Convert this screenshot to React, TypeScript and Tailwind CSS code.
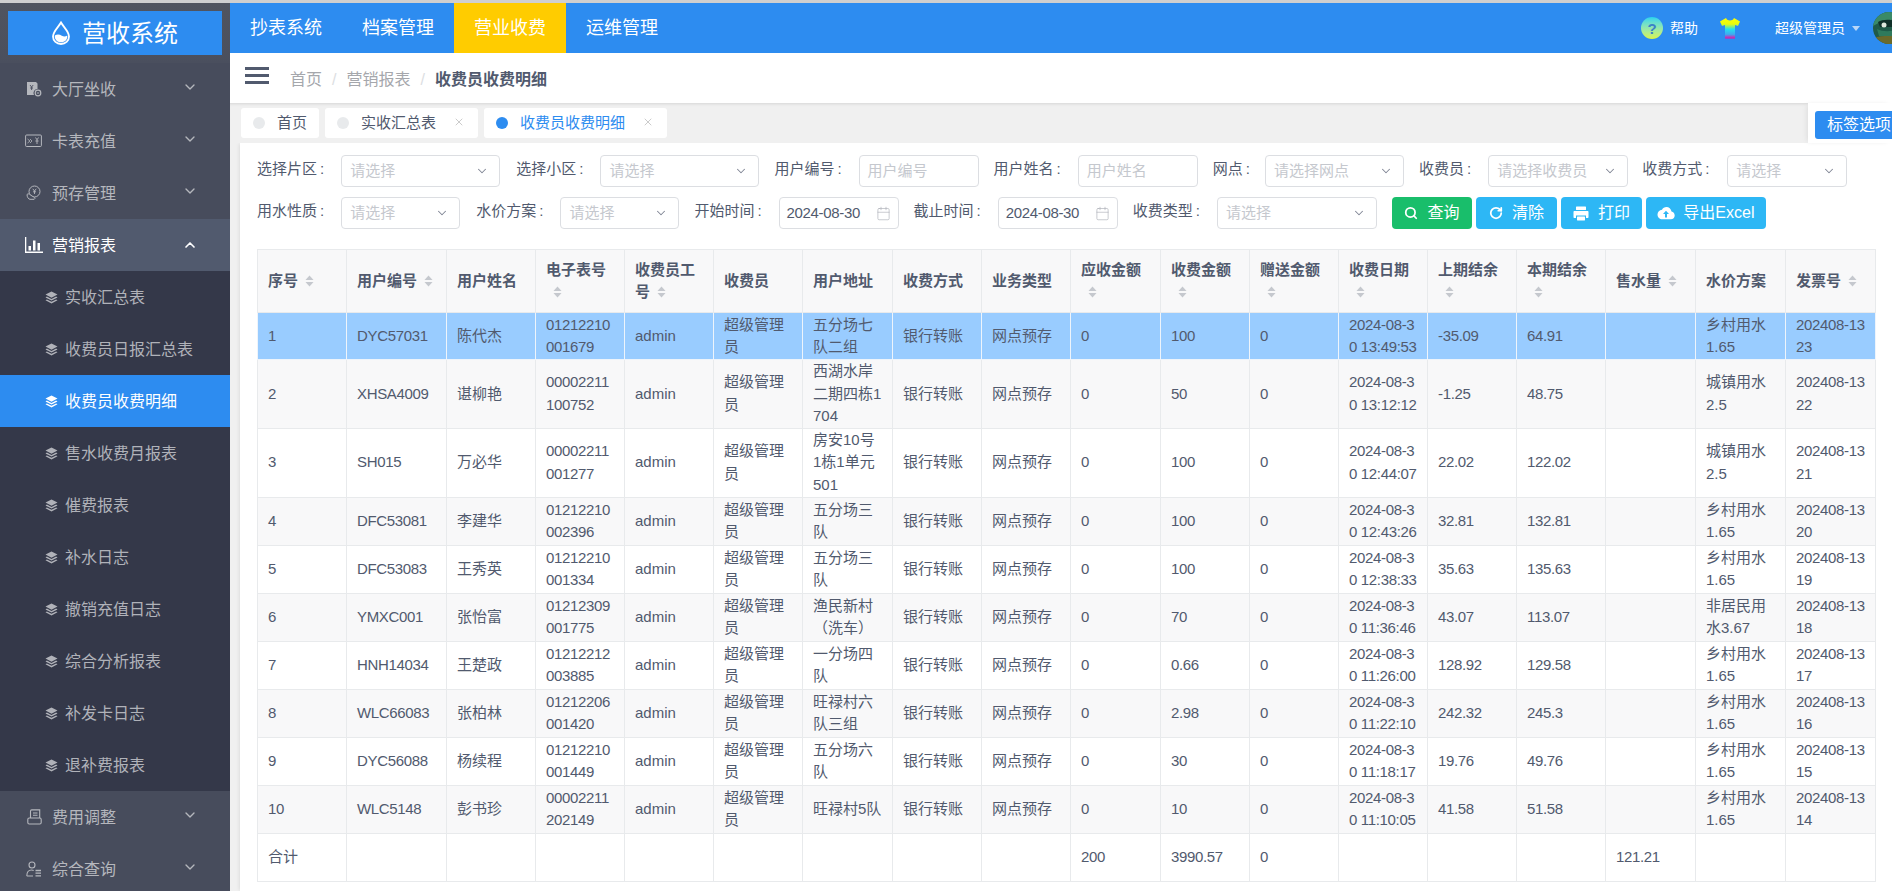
import React from 'react';
import { Calendar, ChevronDown, ChevronUp, RotateCw, Search, X } from 'lucide-react';

const FONT = '"Liberation Sans", "Noto Sans CJK SC", sans-serif';

// 侧边栏 icons
const StackIcon = () => (
  <svg width="13" height="13" viewBox="0 0 13 13" fill="currentColor" className="shrink-0">
    <path d="M6.5 0.5 12.5 3.6 6.5 6.8 0.5 3.6Z" />
    <path d="M1.9 5.6 6.5 8 11.1 5.6 12.5 6.4 6.5 9.6 0.5 6.4Z" />
    <path d="M1.9 8.4 6.5 10.8 11.1 8.4 12.5 9.2 6.5 12.5 0.5 9.2Z" />
  </svg>
);

const HallIcon = () => (
  <svg width="16" height="16" viewBox="0 0 16 16" className="shrink-0">
    <path d="M1 1h9l1.5 1.5V8a4 4 0 0 0-3.5 6H1Z" fill="#b5b7bd" />
    <path d="M4 4l1.6 2L7.2 4M5.6 6v3M4.2 7h2.8" stroke="#474c5c" strokeWidth="0.9" fill="none" />
    <circle cx="12" cy="12" r="2.8" fill="none" stroke="#b5b7bd" strokeWidth="1.2" />
    <path d="M10.8 12h2.4" stroke="#b5b7bd" strokeWidth="1" />
  </svg>
);

const CardIcon = () => (
  <svg width="17" height="14" viewBox="0 0 17 14" fill="none" stroke="#b5b7bd" className="shrink-0">
    <rect x="0.6" y="1" width="15.8" height="11.5" rx="1" strokeWidth="1" />
    <path d="M2.5 5 5 7 2.5 9M5 5 7 7 5 9" strokeWidth="0.8" />
    <path d="M10.5 3.5 12 5.8 13.5 3.5M12 5.8V10M10.4 7h3.2" strokeWidth="0.9" />
  </svg>
);

const SaveIcon = () => (
  <svg width="16" height="16" viewBox="0 0 16 16" fill="none" stroke="#b5b7bd" className="shrink-0">
    <circle cx="8.5" cy="6.5" r="5.5" strokeWidth="1" />
    <path d="M6.8 3.8 8.5 6 10.2 3.8M8.5 6v3M7 6.8h3" strokeWidth="0.9" />
    <path d="M1 9.5c1-1 2.4-.8 3.6.6l2.6 1.6c1.6.6 2.5 1.6 1 2.6H4C2.500 14.300 1 12 1 9.500Z" fill="#474c5c" strokeWidth="1" />
  </svg>
);

const ChartIcon = () => (
  <svg width="18" height="16" viewBox="0 0 18 16" fill="#fff" className="shrink-0">
    <path d="M0 0h1.300v14.500H18V16H0Z" />
    <rect x="3.500" y="9" width="2.500" height="4.500" />
    <rect x="8" y="3.500" width="2.500" height="10" />
    <rect x="12.500" y="6" width="2.500" height="7.500" />
  </svg>
);

const BookIcon = () => (
  <svg width="15" height="16" viewBox="0 0 15 16" fill="none" stroke="#b5b7bd" strokeWidth="1.100" className="shrink-0">
    <path d="M3.500 9V2.200c0-.8.500-1.300 1.200-1.300h8v8.100" />
    <path d="M6 4h4.500M6 6.300h4.500" />
    <rect x="0.800" y="9" width="13.400" height="6" rx="1.400" />
  </svg>
);

const UserIcon = () => (
  <svg width="16" height="16" viewBox="0 0 16 16" fill="none" stroke="#b5b7bd" strokeWidth="1.100" className="shrink-0">
    <circle cx="6" cy="4" r="3" />
    <path d="M0.800 15c0-3.600 1.800-6 4.800-6 .8 0 1.500.2 2.100.5M0.800 15h6.200" />
    <path d="M9.500 9.500H15M9.500 12.200H15M9.500 14.900H15" strokeWidth="1.300" />
  </svg>
);

const SortIcon = () => (
  <svg width="9" height="12" viewBox="0 0 9 12" fill="#c5c8ce" className="inline-block align-[-1px] ml-[7px]">
    <path d="M4.500 0.500 8.500 5H0.500Z" />
    <path d="M4.500 11.500 0.500 7H8.500Z" />
  </svg>
);

const PrinterIcon = () => (
  <svg width="16" height="15" viewBox="0 0 16 15" fill="#fff">
    <rect x="3" y="0.500" width="10" height="3.500" rx="0.600" />
    <path d="M1.500 5h13c.6 0 1 .4 1 1v5c0 .6-.4 1-1 1H13V9.500H3V12H1.500c-.6 0-1-.4-1-1V6c0-.6.400-1 1-1Z" />
    <rect x="4" y="10.500" width="8" height="4" rx="0.400" />
  </svg>
);

const CloudIcon = () => (
  <svg width="18" height="14" viewBox="0 0 18 14" fill="#fff">
    <path d="M14.500 5.600C14.100 2.700 11.900 1 9.500 1 7.500 1 5.800 2 5 3.800 2.500 4 .5 5.900.5 8.500c0 2.800 2.200 4.800 4.800 4.800h8.700c2.100 0 3.700-1.700 3.700-3.800 0-2-1.400-3.700-3.200-3.900Z" />
    <path d="M9 4.800 12 8H10v3.500H8V8H6Z" fill="#2db7f5" />
  </svg>
);

const WaterDrop = () => (
  <svg width="18" height="24" viewBox="0 0 18 24" fill="none" className="shrink-0">
    <path d="M9 1.500C6.500 6 1 10.500 1 15.500 1 20 4.600 23 9 23s8-3 8-7.500C17 10.500 11.500 6 9 1.500Z" stroke="#fff" strokeWidth="1.800" />
    <path d="M2.800 14.500c2.500-1.500 5-1 7 .2 2 1.100 3.500 1 5.500-.2.400 4-2.500 6.800-6.300 6.800-3.900 0-6.600-3-6.200-6.800Z" fill="#fff" />
  </svg>
);

const HelpIcon = () => (
  <div className="relative flex h-[22px] w-[22px] items-center justify-center rounded-full bg-gradient-to-b from-[#22d3ee] to-[#d9f542] text-[15px] font-bold leading-none text-[#3b82c8]">
    ?
  </div>
);

const ShirtIcon = () => (
  <svg width="22" height="22" viewBox="0 0 22 22">
    <defs>
      <linearGradient id="shirtGrad" x1="0" y1="0" x2="0" y2="1">
        <stop offset="0" stopColor="#ffff00" />
        <stop offset="0.3" stopColor="#e8fa10" />
        <stop offset="0.55" stopColor="#22e0ee" />
        <stop offset="0.8" stopColor="#40a8f0" />
        <stop offset="1" stopColor="#f00aa0" />
      </linearGradient>
    </defs>
    <path d="M7 1 1 4.500 3 9l3-1v13.500h10V8l3 1 2-4.500L15 1c-.8 1.800-2.300 2.500-4 2.500S7.800 2.800 7 1Z" fill="url(#shirtGrad)" />
  </svg>
);

const Avatar = () => (
  <svg width="32" height="32" viewBox="0 0 32 32" className="shrink-0 rounded-full">
    <rect width="32" height="32" fill="#1f5a48" />
    <path d="M0 0h32v9C20 6 10 8 0 14Z" fill="#3a8a68" />
    <path d="M5 10c5-3 13-3 20 0l-1 5H7Z" fill="#10302a" />
    <circle cx="11" cy="13" r="2.500" fill="#dfe8de" />
    <path d="M0 26c10-3 22-3 32 0v6H0Z" fill="#6b6a2a" />
    <path d="M4 17c6 3 14 3 22 0v7H6Z" fill="#2f7a5c" />
  </svg>
);

const NAV_TOP_BEFORE = [
  { name: '大厅坐收', icon: <HallIcon /> },
  { name: '卡表充值', icon: <CardIcon /> },
  { name: '预存管理', icon: <SaveIcon /> },
];
const NAV_TOP_AFTER = [
  { name: '费用调整', icon: <BookIcon /> },
  { name: '综合查询', icon: <UserIcon /> },
];
const SUB_MENU = ['实收汇总表', '收费员日报汇总表', '收费员收费明细', '售水收费月报表', '催费报表', '补水日志', '撤销充值日志', '综合分析报表', '补发卡日志', '退补费报表'];

const Sidebar = () => (
  <aside className="flex w-[230px] shrink-0 flex-col overflow-hidden bg-[#474c5c]">
    <div className="h-[60px] shrink-0 bg-gradient-to-b from-[#50545f] to-[#4a4f5e] pl-2 pr-2 pt-2">
      <div className="flex h-[44px] items-center justify-center gap-3 bg-[#2d8cf0] text-[24px] leading-none text-white">
        <WaterDrop />
        <span className="mt-[2px]">营收系统</span>
      </div>
    </div>
    {NAV_TOP_BEFORE.map((m) => (
      <div key={m.name} className="flex h-[52px] shrink-0 items-center text-[16px] text-[#b5b7bd]">
        <div className="flex w-[52px] justify-end pr-[10px]">{m.icon}</div>
        <span className="mt-[2px]">{m.name}</span>
        <ChevronDown size={16} strokeWidth={2} className="ml-auto mr-[32px] -mt-1" />
      </div>
    ))}
    <div className="flex h-[52px] shrink-0 items-center bg-[#515a6e] text-[16px] text-white">
      <div className="flex w-[52px] justify-end pr-[9px]"><ChartIcon /></div>
      <span className="mt-[2px]">营销报表</span>
      <ChevronUp size={16} strokeWidth={2.500} className="ml-auto mr-[32px]" />
    </div>
    <div className="shrink-0 bg-[#343849]">
      {SUB_MENU.map((s) => (
        <div key={s} className={`flex h-[52px] items-center pl-[45px] text-[16px] ${s === '收费员收费明细' ? 'bg-[#2d8cf0] text-white' : 'text-[#b0b2b9]'}`}>
          <StackIcon />
          <span className="ml-[7px] mt-[2px]">{s}</span>
        </div>
      ))}
    </div>
    {NAV_TOP_AFTER.map((m) => (
      <div key={m.name} className="flex h-[52px] shrink-0 items-center text-[16px] text-[#b5b7bd]">
        <div className="flex w-[52px] justify-end pr-[10px]">{m.icon}</div>
        <span className="mt-[2px]">{m.name}</span>
        <ChevronDown size={16} strokeWidth={2} className="ml-auto mr-[32px] -mt-1" />
      </div>
    ))}
  </aside>
);

const TopBar = () => (
  <header className="flex h-[50px] shrink-0 items-stretch bg-[#2d8cf0] text-white">
    {['抄表系统', '档案管理', '营业收费', '运维管理'].map((n) => (
      <div key={n} className={`flex w-[112px] items-center justify-center text-[18px] ${n === '营业收费' ? 'bg-[#ffcc00]' : ''}`}>
        {n}
      </div>
    ))}
    <div className="ml-auto -mr-[13px] flex items-center">
      <HelpIcon />
      <span className="ml-[7px] text-[14px]">帮助</span>
      <div className="ml-[21px]"><ShirtIcon /></div>
      <span className="ml-[34px] text-[14px]">超级管理员</span>
      <span className="ml-[7px] mr-[13px] h-0 w-0 border-x-[4px] border-t-[5px] border-x-transparent border-t-[#b9d7f8]" />
      <Avatar />
    </div>
  </header>
);

const Breadcrumb = () => (
  <div className="flex h-[50px] shrink-0 items-center bg-white pl-[15px] pt-[4px] text-[16px]">
    <div className="-mt-[10px] flex w-[24px] flex-col gap-[4px]">
      <span className="h-[3px] bg-[#515a6e]" />
      <span className="h-[3px] bg-[#515a6e]" />
      <span className="h-[3px] bg-[#515a6e]" />
    </div>
    <span className="ml-[21px] text-[#a5a7ac]">首页</span>
    <span className="mx-[10px] text-[#dcdee2]">/</span>
    <span className="text-[#a5a7ac]">营销报表</span>
    <span className="mx-[10px] text-[#dcdee2]">/</span>
    <span className="font-bold text-[#515a6e]">收费员收费明细</span>
  </div>
);

const TabsBar = () => (
  <div className="relative flex h-[40px] shrink-0 items-center gap-[6px] bg-[#f0f0f0] pl-[11px] text-[15px] shadow-[inset_0_3px_3px_-2px_#d5d5d5]">
    <div className="flex h-[30px] w-[78px] items-center rounded-[3px] bg-white pl-[12px] text-[#515a6e]">
      <span className="mr-[12px] h-[12px] w-[12px] rounded-full bg-[#e8eaec]" />
      首页
    </div>
    <div className="flex h-[30px] w-[153px] items-center rounded-[3px] bg-white pl-[12px] text-[#515a6e]">
      <span className="mr-[12px] h-[12px] w-[12px] rounded-full bg-[#e8eaec]" />
      实收汇总表
      <X size={12} strokeWidth={1.200} className="ml-[17px] -mt-[2px] text-[#a8a8a8]" />
    </div>
    <div className="flex h-[30px] w-[183px] items-center rounded-[3px] bg-white pl-[12px] text-[#2d8cf0]">
      <span className="mr-[12px] h-[12px] w-[12px] rounded-full bg-[#2d8cf0]" />
      收费员收费明细
      <X size={12} strokeWidth={1.200} className="ml-[17px] -mt-[2px] text-[#a8a8a8]" />
    </div>
    <div className="absolute right-0 top-0 flex h-[40px] w-[84px] items-start overflow-hidden bg-white pl-[7px] pt-[8px] shadow-[-3px_0_5px_-2px_#dcdcdc]">
      <div className="flex h-[28px] w-[100px] shrink-0 items-center rounded-[3px] bg-[#2d8cf0] pl-[12px] text-[16px] whitespace-nowrap text-white">标签选项</div>
    </div>
  </div>
);

const Label = ({ text, gap = 'mr-[17px]' }: { text: string; gap?: string }) => (
  <span className={`-mt-[3px] whitespace-nowrap text-[15px] text-[#515a6e] ${gap}`}>
    {text}<span className="ml-[3px]">:</span>
  </span>
);

const SelectBox = ({ width, placeholder = '请选择' }: { width: string; placeholder?: string }) => (
  <div className={`flex h-[32px] items-center justify-between rounded-[4px] border border-[#dcdee2] bg-white pl-[8px] pr-[10px] text-[15px] text-[#c5c8ce] ${width}`}>
    <span className="whitespace-nowrap">{placeholder}</span>
    <ChevronDown size={14} strokeWidth={1.800} className="text-[#808695]" />
  </div>
);

const TextInput = ({ placeholder }: { placeholder: string }) => (
  <div className="flex h-[32px] w-[120px] items-center rounded-[4px] border border-[#dcdee2] bg-white pl-[8px] text-[15px] text-[#c5c8ce]">
    {placeholder}
  </div>
);

const DateInput = () => (
  <div className="flex h-[32px] w-[120px] items-center justify-between rounded-[4px] border border-[#dcdee2] bg-white pl-[7px] pr-[7px] text-[15px] tracking-[-0.34px] text-[#515a6e]">
    2024-08-30
    <Calendar size={15} strokeWidth={1} className="text-[#a8acb3]" />
  </div>
);

const Filters = () => (
  <div className="flex flex-col gap-[10px] pl-[17px] pt-[12px]">
    <div className="flex items-center">
      <Label text="选择片区" /><SelectBox width="w-[159px]" />
      <div className="w-[16px]" />
      <Label text="选择小区" /><SelectBox width="w-[159px]" />
      <div className="w-[15px]" />
      <Label text="用户编号" /><TextInput placeholder="用户编号" />
      <div className="w-[15px]" />
      <Label text="用户姓名" /><TextInput placeholder="用户姓名" />
      <div className="w-[15px]" />
      <Label text="网点" gap="mr-[15px]" /><SelectBox width="w-[139px]" placeholder="请选择网点" />
      <div className="w-[15px]" />
      <Label text="收费员" gap="mr-[17px]" /><SelectBox width="w-[140px]" placeholder="请选择收费员" />
      <div className="w-[14px]" />
      <Label text="收费方式" gap="mr-[18px]" /><SelectBox width="w-[120px]" />
    </div>
    <div className="flex items-center">
      <Label text="用水性质" /><SelectBox width="w-[119px]" />
      <div className="w-[16px]" />
      <Label text="水价方案" /><SelectBox width="w-[119px]" />
      <div className="w-[15px]" />
      <Label text="开始时间" /><DateInput />
      <div className="w-[15px]" />
      <Label text="截止时间" /><DateInput />
      <div className="w-[15px]" />
      <Label text="收费类型" /><SelectBox width="w-[160px]" />
      <button className="ml-[15px] flex h-[32px] w-[80px] items-center justify-center gap-[9px] rounded-[4px] bg-[#19be6b] text-[16px] text-white">
        <Search size={14} strokeWidth={3} />查询
      </button>
      <button className="ml-[4px] flex h-[32px] w-[81px] items-center justify-center gap-[9px] rounded-[4px] bg-[#2db7f5] text-[16px] text-white">
        <RotateCw size={14} strokeWidth={3} />清除
      </button>
      <button className="ml-[4px] flex h-[32px] w-[81px] items-center justify-center gap-[9px] rounded-[4px] bg-[#2db7f5] text-[16px] text-white">
        <PrinterIcon />打印
      </button>
      <button className="ml-[4px] flex h-[32px] w-[120px] items-center justify-center gap-[8px] rounded-[4px] bg-[#2db7f5] text-[16px] text-white">
        <CloudIcon />导出Excel
      </button>
    </div>
  </div>
);

type Col = { title: string; width: string; sort?: boolean; num?: boolean };

const COLS: Col[] = [
  { title: '序号', width: 'w-[89px]', sort: true, num: true },
  { title: '用户编号', width: 'w-[100px]', sort: true, num: true },
  { title: '用户姓名', width: 'w-[89px]' },
  { title: '电子表号', width: 'w-[89px]', sort: true, num: true },
  { title: '收费员工号', width: 'w-[89px]', sort: true },
  { title: '收费员', width: 'w-[89px]' },
  { title: '用户地址', width: 'w-[90px]' },
  { title: '收费方式', width: 'w-[89px]' },
  { title: '业务类型', width: 'w-[89px]' },
  { title: '应收金额', width: 'w-[90px]', sort: true, num: true },
  { title: '收费金额', width: 'w-[89px]', sort: true, num: true },
  { title: '赠送金额', width: 'w-[89px]', num: true, sort: true },
  { title: '收费日期', width: 'w-[89px]', sort: true, num: true },
  { title: '上期结余', width: 'w-[89px]', sort: true, num: true },
  { title: '本期结余', width: 'w-[89px]', sort: true, num: true },
  { title: '售水量', width: 'w-[90px]', sort: true, num: true },
  { title: '水价方案', width: 'w-[90px]' },
  { title: '发票号', width: 'w-[90px]', sort: true, num: true },
];

const ROWS: string[][] = [
  ['1', 'DYC57031', '陈代杰', '01212210\n001679', 'admin', '超级管理员', '五分场七队二组', '银行转账', '网点预存', '0', '100', '0', '2024-08-30 13:49:53', '-35.09', '64.91', '', '乡村用水1.65', '202408-13\n23'],
  ['2', 'XHSA4009', '谌柳艳', '00002211\n100752', 'admin', '超级管理员', '西湖水岸\n二期四栋1\n704', '银行转账', '网点预存', '0', '50', '0', '2024-08-30 13:12:12', '-1.25', '48.75', '', '城镇用水2.5', '202408-13\n22'],
  ['3', 'SH015', '万必华', '00002211\n001277', 'admin', '超级管理员', '房安10号\n1栋1单元\n501', '银行转账', '网点预存', '0', '100', '0', '2024-08-30 12:44:07', '22.02', '122.02', '', '城镇用水2.5', '202408-13\n21'],
  ['4', 'DFC53081', '李建华', '01212210\n002396', 'admin', '超级管理员', '五分场三队', '银行转账', '网点预存', '0', '100', '0', '2024-08-30 12:43:26', '32.81', '132.81', '', '乡村用水1.65', '202408-13\n20'],
  ['5', 'DFC53083', '王秀英', '01212210\n001334', 'admin', '超级管理员', '五分场三队', '银行转账', '网点预存', '0', '100', '0', '2024-08-30 12:38:33', '35.63', '135.63', '', '乡村用水1.65', '202408-13\n19'],
  ['6', 'YMXC001', '张怡富', '01212309\n001775', 'admin', '超级管理员', '渔民新村（洗车）', '银行转账', '网点预存', '0', '70', '0', '2024-08-30 11:36:46', '43.07', '113.07', '', '非居民用水3.67', '202408-13\n18'],
  ['7', 'HNH14034', '王楚政', '01212212\n003885', 'admin', '超级管理员', '一分场四队', '银行转账', '网点预存', '0', '0.66', '0', '2024-08-30 11:26:00', '128.92', '129.58', '', '乡村用水1.65', '202408-13\n17'],
  ['8', 'WLC66083', '张柏林', '01212206\n001420', 'admin', '超级管理员', '旺禄村六队三组', '银行转账', '网点预存', '0', '2.98', '0', '2024-08-30 11:22:10', '242.32', '245.3', '', '乡村用水1.65', '202408-13\n16'],
  ['9', 'DYC56088', '杨续程', '01212210\n001449', 'admin', '超级管理员', '五分场六队', '银行转账', '网点预存', '0', '30', '0', '2024-08-30 11:18:17', '19.76', '49.76', '', '乡村用水1.65', '202408-13\n15'],
  ['10', 'WLC5148', '彭书珍', '00002211\n202149', 'admin', '超级管理员', '旺禄村5队', '银行转账', '网点预存', '0', '10', '0', '2024-08-30 11:10:05', '41.58', '51.58', '', '乡村用水1.65', '202408-13\n14'],
];

const TOTAL = ['合计', '', '', '', '', '', '', '', '', '200', '3990.57', '0', '', '', '', '121.21', '', ''];

const cellClass = 'border border-[#e8eaec] pl-[10px] pr-[8px] align-middle break-all whitespace-pre-line';

const rowHeight = (i: number) => (i === 0 ? 'h-[47px]' : i === 1 ? 'h-[68px]' : i === 2 ? 'h-[69px]' : 'h-[48px]');

const DataTable = () => (
  <div className="pl-[17px] pt-[20px]">
    <table className="w-[1616px] table-fixed border-collapse border border-[#dcdee2] text-[15px] leading-[22.500px] text-[#515a6e]">
      <colgroup>
        {COLS.map((c) => <col key={c.title} className={c.width} />)}
      </colgroup>
      <thead>
        <tr className="h-[63px] bg-[#f8f8f9]">
          {COLS.map((c) => (
            <th key={c.title} className={`${cellClass} text-left font-bold`}>
              {c.title}
              {c.sort && <SortIcon />}
            </th>
          ))}
        </tr>
      </thead>
      <tbody>
        {ROWS.map((row, i) => (
          <tr key={row[0]} className={`${rowHeight(i)} ${i === 0 ? 'bg-[#99ccff]' : i % 2 === 1 ? 'bg-[#f8f8f9]' : 'bg-white'}`}>
            {row.map((v, j) => (
              <td key={j} className={`${cellClass} ${COLS[j].num ? 'tracking-[-0.34px]' : ''} ${i === 0 ? 'border-[#eef4fb]' : ''}`}>{v}</td>
            ))}
          </tr>
        ))}
        <tr className="h-[48px] bg-white">
          {TOTAL.map((v, j) => (
            <td key={j} className={`${cellClass} ${COLS[j].num && j > 0 ? 'tracking-[-0.34px]' : ''}`}>{v}</td>
          ))}
        </tr>
      </tbody>
    </table>
  </div>
);

export default function App() {
  return (
    <div className="h-[891px] w-full overflow-hidden bg-white" style={{ fontFamily: FONT }}>
      <div className="h-[3px] bg-[#cfcfcf]" />
      <div className="flex h-[888px]">
        <Sidebar />
        <div className="flex min-w-0 flex-1 flex-col">
          <TopBar />
          <Breadcrumb />
          <TabsBar />
          <div className="flex min-h-0 flex-1 bg-[#f0f0f0] pl-[10px]">
            <div className="flex-1 bg-white shadow-[-2px_0_3px_-1px_#dddddd]">
              <Filters />
              <DataTable />
            </div>
          </div>
        </div>
      </div>
    </div>
  );
}
